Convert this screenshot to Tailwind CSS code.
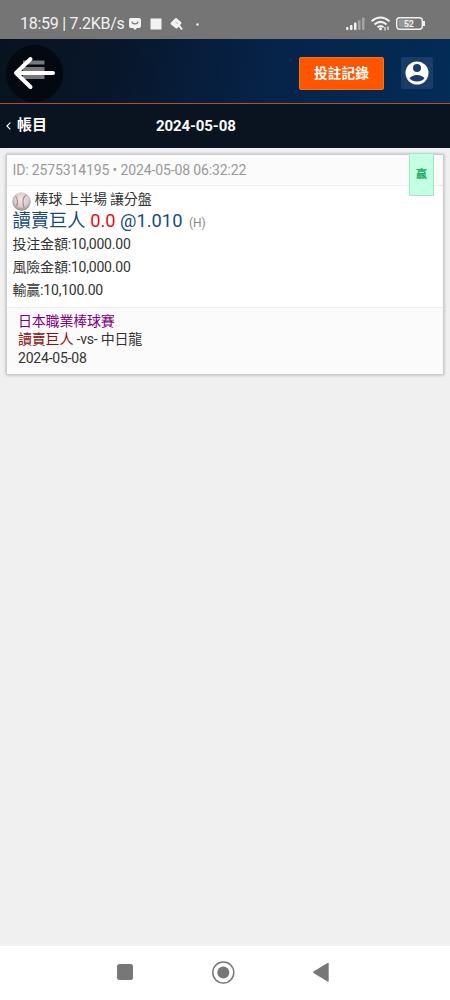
<!DOCTYPE html>
<html lang="zh-Hant">
<head>
<meta charset="utf-8">
<title>帳目</title>
<script src="https://cdn.jsdelivr.net/npm/@tailwindcss/browser@4"></script>
</head>
<body class="flex h-[1000px] w-[450px] flex-col overflow-hidden bg-[#f0f0f0] font-[Roboto,'Noto_Sans_CJK_TC',sans-serif] text-[#333]">
  <div class="flex h-[39px] shrink-0 items-center bg-[#757575] pt-[9px] pl-5 text-[#f2f2f2]">
    <span class="w-[109px] text-[16px] leading-5 tracking-[-0.28px] whitespace-nowrap">18:59 | 7.2KB/s</span>
    <svg class="h-[14px] w-[74px]" viewBox="0 0 74 14" fill="#f2f2f2">
      <path d="M2 1h8q2 0 2 2v6q0 2-2 2H8l-2 2-2-2H2q-2 0-2-2V3q0-2 2-2z"/>
      <path d="M3.200 4.500v1.200q2.800 2.200 5.600 0V4.500" fill="none" stroke="#757575" stroke-width="1.200"/>
      <rect x="21.500" y="1.500" width="11" height="11"/>
      <path d="M42 5.500l4-4q1-1 2 0l4 3.500q1 1 0 2l-3.500 4q-1 1-2 0L42 7.500q-1-1 0-2z"/>
      <path d="M50 8.500l3 4" stroke="#f2f2f2" stroke-width="2"/>
      <path d="M46.500 5l2 1.500" stroke="#aaa" stroke-width="1" fill="none"/>
      <circle cx="68.500" cy="7.500" r="1.200"/>
    </svg>
    <svg class="ml-[142px] h-4 w-20" viewBox="0 0 80 16" fill="#f2f2f2">
      <rect x="1" y="11" width="2.500" height="3" rx="1"/><rect x="5" y="9" width="2.500" height="5" rx="1"/><rect x="9" y="6.500" width="2.500" height="7.500" rx="1"/>
      <g fill="#a5a5a5"><rect x="13" y="4" width="2.500" height="10" rx="1"/><rect x="17" y="1.500" width="2.500" height="12.500" rx="1"/></g>
      <g fill="none" stroke="#f2f2f2" stroke-width="2"><path d="M26.500 5.300q9-7.500 18 0"/><path d="M29.500 8.400q6-5 12 0"/><path d="M32.500 11.300q3-2.500 6 0"/></g>
      <circle cx="35.500" cy="12.800" r="1.500"/><path d="M40 11v3.500M43 10.500v3.500" stroke="#f2f2f2" stroke-width="1.200"/>
      <rect x="51.700" y="1.700" width="25.600" height="11.600" rx="3" fill="none" stroke="#f2f2f2" stroke-width="1.400"/>
      <rect x="53.500" y="3.500" width="12" height="8" rx="1" fill="#979797"/>
      <path d="M79 5v5" stroke="#f2f2f2" stroke-width="2"/>
      <text x="59" y="10.800" font-family="Roboto" font-size="8.500" font-weight="700">52</text>
    </svg>
  </div>

  <header class="flex h-16 shrink-0 items-center bg-[linear-gradient(100deg,#08131f_0%,#08162a_25%,#062349_60%,#032c56_100%)] pl-[6px]">
    <svg class="mt-[4px] h-[57px] w-[57px]" viewBox="0 0 57 57">
      <circle cx="28.500" cy="28.500" r="28.500" fill="#030811"/>
      <path d="M17 17.500h21.500M17 32h21.500" stroke="#77797d" stroke-width="4"/>
      <path d="M17 24.500h21.500" stroke="#77797d" stroke-width="5"/>
      <path d="M24.500 14L10 28 24.500 42M10 28h37" fill="none" stroke="#fff" stroke-width="4" stroke-linecap="round" stroke-linejoin="round"/>
    </svg>
    <button class="mt-1 ml-[236px] h-[33px] w-[85px] rounded-[2px] border border-[#f07a12] bg-[#ff5500] pb-px text-[13.7px] leading-5 font-bold text-white">投註記錄</button>
    <div class="mt-1 ml-[17px] flex h-8 w-8 items-center justify-center rounded-[2px] bg-[#193c68]">
      <svg class="h-[24px] w-[24px]" viewBox="0 0 24 24"><circle cx="12" cy="12" r="11.500" fill="#fff"/><circle cx="12" cy="7" r="4" fill="#193c68"/><path d="M4.500 17.500C7 12.700 17 12.700 19.500 17.500 16 21.500 8 21.500 4.500 17.500z" fill="#193c68"/></svg>
    </div>
  </header>
  <div class="h-px shrink-0 bg-[#bd4c24]"></div>

  <nav class="grid h-11 shrink-0 grid-cols-[156px_1fr] items-center bg-[#0a1421] text-white">
    <div class="flex items-center pl-[6px]">
      <svg class="h-2 w-[5px]" viewBox="0 0 5 8"><path d="M4.300.7L1 4l3.300 3.300" fill="none" stroke="#fff" stroke-width="1.200"/></svg>
      <span class="ml-[6px] pb-[2px] text-[15px] leading-5 font-bold">帳目</span>
    </div>
    <span class="text-[15px] leading-5 font-bold tracking-[-0.1px]">2024-05-08</span>
  </nav>

  <main class="grow px-[6px] pt-[6px]">
    <article class="relative h-[221px] border border-[#ccc] bg-white text-[14px] tracking-[-0.2px] shadow-[0_0_3px_rgba(0,0,0,0.28)]">
      <div class="h-[31px] border-b border-[#eee] bg-[#fbfbfb] pl-[5.500px] text-[14px] leading-[30px] tracking-[-0.13px] whitespace-nowrap text-[#999]">ID: 2575314195 • 2024-05-08 06:32:22</div>
      <div class="absolute -top-[2px] right-[9px] flex h-[43px] w-[25px] items-center justify-center border border-[#a5e8c9] bg-[#c3ffe3] pt-[2px] text-[11px] font-bold text-[#12ac5b]">贏</div>
      <div class="h-[121px] pt-[3px] pl-[5.500px]">
        <div class="flex h-[21px] items-center">
          <svg class="mt-[3px] mr-[3.500px] -ml-[0.500px] h-[19px] w-[19px]" viewBox="0 0 19 19">
            <defs><radialGradient id="ball" cx=".5" cy=".4" r=".6"><stop offset="0" stop-color="#f1eaea"/><stop offset=".65" stop-color="#d4cbca"/><stop offset="1" stop-color="#918584"/></radialGradient></defs>
            <circle cx="9.500" cy="9.500" r="9.200" fill="url(#ball)"/>
            <path d="M3.500 4q3.500 5 1 10M14.500 3q-5.500 3-2.500 13" fill="none" stroke="#b88380" stroke-width="1.100"/>
          </svg>
          <span class="whitespace-nowrap">棒球 上半場 讓分盤</span>
        </div>
        <div class="flex h-[22px] items-center text-[18.300px] leading-[22px] tracking-normal whitespace-pre text-[#1b4b78]"><span>讀賣巨人 </span><span class="text-[#e00f1b]">0.0</span><span> @1.010 </span><span class="-ml-px pt-1 text-[12px] text-[#888]"> (H)</span></div>
        <div class="pt-px leading-[23px]">投注金額:10,000.00</div>
        <div class="leading-[23px]">風險金額:10,000.00</div>
        <div class="leading-[23px]">輸贏:10,100.00</div>
      </div>
      <div class="h-[67px] border-t border-[#eee] bg-[#fbfbfb] pt-[4px] pl-[11px] leading-[18.300px]">
        <div class="text-[#800080]">日本職業棒球賽</div>
        <div><span class="text-[#8b1111]">讀賣巨人</span> -vs- 中日龍</div>
        <div>2024-05-08</div>
      </div>
    </article>
  </main>

  <footer class="flex h-[54px] shrink-0 items-center bg-white pl-[117px]">
    <svg class="mt-px h-6 w-[213px] overflow-visible" viewBox="0 0 213 24" fill="#777"><rect y="2" width="16" height="16" rx="2.500" /><circle cx="106.300" cy="10.500" r="10.500" fill="none" stroke="#777" stroke-width="1.500"/><circle cx="106.300" cy="10.500" r="6"/><path d="M196.500 9.500q-1 .7 0 1.500l14 8.500q1.200.6 1.200-.8V1.800q0-1.400-1.200-.8z"/></svg>
  </footer>
</body>
</html>
